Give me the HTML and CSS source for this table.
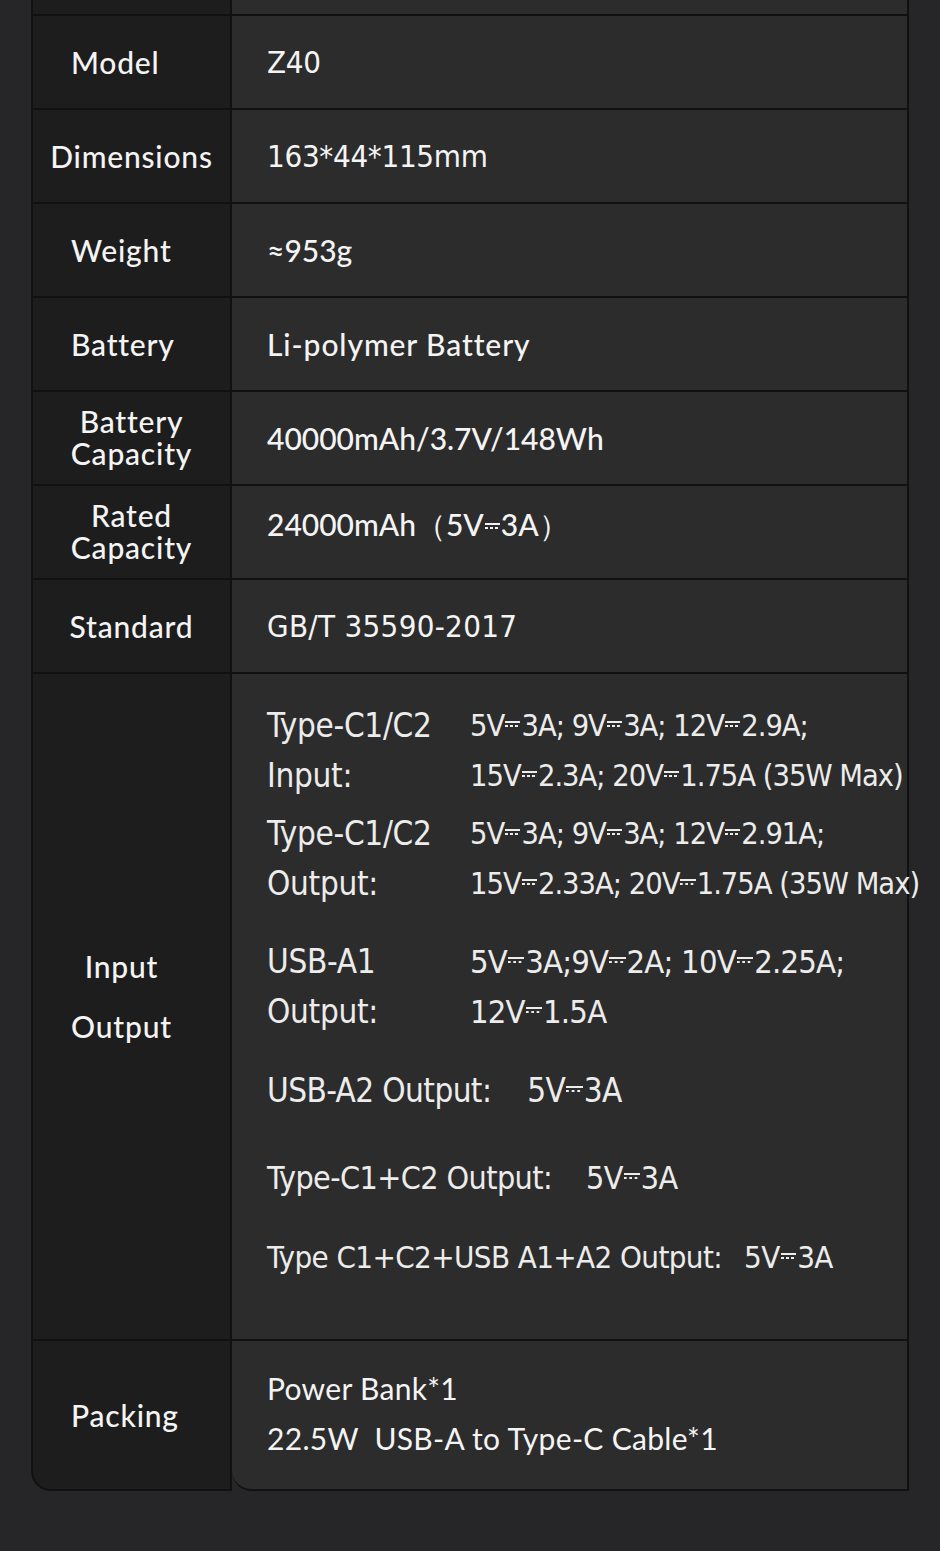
FILE: index.html
```html
<!DOCTYPE html>
<html lang="en">
<head>
<meta charset="utf-8">
<title>Z40 Specifications</title>
<link rel="stylesheet" href="styles.css">
</head>
<body>
<div class="spec">
  <div class="cell label"></div><div class="cell value"></div>

  <div class="cell label left">Model</div>
  <div class="cell value din">Z40</div>

  <div class="cell label">Dimensions</div>
  <div class="cell value din">163*44*115mm</div>

  <div class="cell label left">Weight</div>
  <div class="cell value">≈953g</div>

  <div class="cell label left">Battery</div>
  <div class="cell value wide">Li-polymer Battery</div>

  <div class="cell label two">Battery<br>Capacity</div>
  <div class="cell value">40000mAh/3.7V/148Wh</div>

  <div class="cell label two">Rated<br>Capacity</div>
  <div class="cell value rated">24000mAh（5V<span class="dc"></span>3A）</div>

  <div class="cell label">Standard</div>
  <div class="cell value din std">GB/T 35590-2017</div>

  <div class="cell label io">Input<br>Output</div>
  <div class="cell value io-list">
    <div class="pair">
      <span class="k">Type-C1/C2</span><span class="v">5V<span class="dc"></span>3A; 9V<span class="dc"></span>3A; 12V<span class="dc"></span>2.9A;</span>
      <span class="k">Input:</span><span class="v">15V<span class="dc"></span>2.3A; 20V<span class="dc"></span>1.75A (35W Max)</span>
    </div>
    <div class="pair">
      <span class="k">Type-C1/C2</span><span class="v">5V<span class="dc"></span>3A; 9V<span class="dc"></span>3A; 12V<span class="dc"></span>2.91A;</span>
      <span class="k">Output:</span><span class="v">15V<span class="dc"></span>2.33A; 20V<span class="dc"></span>1.75A (35W Max)</span>
    </div>
    <div class="pair usb">
      <span class="k">USB-A1</span><span class="v">5V<span class="dc"></span>3A;9V<span class="dc"></span>2A; 10V<span class="dc"></span>2.25A;</span>
      <span class="k">Output:</span><span class="v">12V<span class="dc"></span>1.5A</span>
    </div>
    <div class="single s1">USB-A2 Output:<span class="gap"></span>5V<span class="dc"></span>3A</div>
    <div class="single s2">Type-C1+C2 Output:<span class="gap"></span>5V<span class="dc"></span>3A</div>
    <div class="single s3">Type C1+C2+USB A1+A2 Output:<span class="gap sm"></span>5V<span class="dc"></span>3A</div>
  </div>

  <div class="cell label left last">Packing</div>
  <div class="cell value last pack">
    <div>Power Bank*1</div>
    <div>22.5W&nbsp; USB-A to Type-C Cable*1</div>
  </div>
</div>
</body>
</html>
```
FILE: styles.css
```css
html, body {
  margin: 0;
  padding: 0;
}
body {
  background: #262628;
  color: #f4f4f4;
  font-family: Lato, "Noto Sans", sans-serif;
  width: 940px;
  height: 1551px;
  overflow: hidden;
}
.spec {
  display: grid;
  grid-template-columns: 201px 677px;
  grid-template-rows: 16px repeat(7, 94px) 667px 150px;
  margin-left: 31px;
  width: 878px;
}
.cell {
  box-sizing: border-box;
  border-bottom: 2px solid #111112;
  display: flex;
  align-items: center;
  min-width: 0;
}
.label {
  background: #1d1d1e;
  border-left: 2px solid #111112;
  border-right: 2px solid #111112;
  justify-content: center;
  text-align: center;
  font-size: 30px;
  font-weight: 500;
  letter-spacing: 0.8px;
  line-height: 32px;
}
.label.left {
  justify-content: flex-start;
  padding-left: 38px;
}
.value {
  background: #2c2c2d;
  border-right: 2px solid #111112;
  padding-left: 35px;
  font-size: 30px;
  font-weight: 500;
  white-space: nowrap;
}
.wide {
  letter-spacing: 0.9px;
}
.din {
  font-family: "Liberation Sans Narrow", "DejaVu Sans Condensed", sans-serif;
  font-size: 31px;
  font-weight: 400;
  letter-spacing: -0.3px;
}
.din.std {
  letter-spacing: 0.3px;
}
.rated {
  padding-bottom: 12px;
}
.two {
  padding-bottom: 2px;
}
.io {
  line-height: 60px;
  padding-bottom: 22px;
  padding-right: 20px;
}
.io-list {
  flex-direction: column;
  align-items: flex-start;
  justify-content: flex-start;
  padding-top: 27px;
  font-family: "Liberation Sans Narrow", "DejaVu Sans Condensed", sans-serif;
  font-size: 31px;
  font-weight: 400;
  letter-spacing: -0.6px;
  color: #ececec;
  overflow: visible;
}
.pair {
  display: grid;
  grid-template-columns: 203px auto;
  line-height: 50px;
  margin-bottom: 8px;
}
.pair .k {
  font-size: 33px;
  letter-spacing: -0.3px;
}
.pair .v {
  font-size: 30.5px;
  letter-spacing: -1px;
}
.pair.usb {
  margin-top: 20px;
}
.pair.usb .v {
  font-size: 32.5px;
  letter-spacing: -0.8px;
}
.single {
  line-height: 50px;
}
.s1 { margin-top: 21px; font-size: 33px; }
.s2 { margin-top: 37px; font-size: 32px; }
.s3 { margin-top: 29px; font-size: 31px; }
.gap {
  display: inline-block;
  width: 36px;
}
.s2 .gap {
  width: 34px;
}
.gap.sm {
  width: 22px;
}
.dc {
  display: inline-block;
  width: 0.5em;
  height: 0.2em;
  box-sizing: border-box;
  border-top: 2px solid currentColor;
  background: linear-gradient(90deg, currentColor 55%, transparent 55%) left bottom / 33.33% 2px repeat-x;
  vertical-align: 0.3em;
  margin: 0 1px;
}
.pack {
  flex-direction: column;
  align-items: flex-start;
  justify-content: center;
  font-weight: 400;
  line-height: 50px;
  padding-bottom: 4px;
  letter-spacing: 0.3px;
}
.last {
  border-bottom-left-radius: 20px;
}
```
